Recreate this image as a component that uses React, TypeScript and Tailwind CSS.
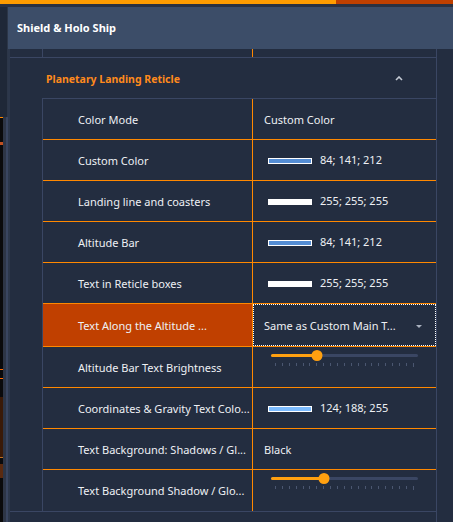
import React from "react";

const border = "border-[#3a4663]";

type RowProps = {
  label: string;
  children?: React.ReactNode;
  selected?: boolean;
  last?: boolean;
};

function Row({ label, children, selected, last }: RowProps) {
  return (
    <div
      className={`flex ${selected ? "h-[43px]" : "h-[41px]"} ${
        last ? "" : "border-b border-[#ff8800]"
      }`}
    >
      <div
        className={`flex w-[210px] shrink-0 items-center overflow-hidden whitespace-nowrap border-r border-[#ff8800] pl-[35px] pt-[2px] ${
          selected ? "bg-[#c04000]" : ""
        }`}
      >
        {label}
      </div>
      <div
        className={`flex min-w-0 flex-1 flex-col ${
          selected ? "border border-dotted border-white" : ""
        }`}
      >
        {children}
      </div>
    </div>
  );
}

function Text({ children }: { children: React.ReactNode }) {
  return <div className="flex h-full items-center pl-[11px] pt-[2px]">{children}</div>;
}

function Swatch({ color, value }: { color: string; value: string }) {
  return (
    <div className="flex h-full items-center pl-[15px] pt-px">
      <span
        className="h-[6px] w-[44px] border border-white"
        style={{ backgroundColor: color }}
      />
      <span className="ml-[8px]">{value}</span>
    </div>
  );
}

function Slider({ pct }: { pct: number }) {
  return (
    <div className="pt-[7px]">
      <div className="relative ml-[18px] h-[3px] w-[147px] rounded-full bg-[#3a4663]">
        <div
          className="absolute left-0 top-0 h-[3px] rounded-full bg-[#ffa010]"
          style={{ width: `${pct}%` }}
        />
        <div
          className="absolute top-[-4px] h-[11px] w-[11px] -translate-x-1/2 rounded-full bg-[#ffa010]"
          style={{ left: `${pct}%` }}
        />
      </div>
      <div className="ml-[22px] mt-[6px] flex w-[139px] justify-between">
        {Array.from({ length: 21 }).map((_, i) => (
          <span
            key={i}
            className={`w-px bg-[#4a5670] ${i === 20 ? "h-[4px]" : "h-[3px]"}`}
          />
        ))}
      </div>
    </div>
  );
}

export default function App() {
  return (
    <div
      className="flex h-[522px] w-[453px] flex-col overflow-hidden bg-[#232d40] text-[11px] text-[#eef0f4]"
      style={{ fontFamily: '"Noto Sans", "Open Sans", sans-serif' }}
    >
      <div className="flex h-[4px] shrink-0">
        <div className="w-[336px] bg-[#ff9c00]" />
        <div className="flex-1 bg-[#c04000]" />
      </div>
      <div className="h-[3px] shrink-0 bg-[#2a3141]" />

      <div className="flex flex-1">
        {/* left edge: backdrop peeking through */}
        <div className="flex w-[8px] shrink-0 flex-col">
          <div className="h-[110px] border-r border-[#2c3648] bg-[#1f2838]" />
          <div className="flex flex-1">
            <div className="flex w-[3px] flex-col bg-[#0a0a0c]">
              <div className="h-px bg-[#ff8800]" />
              <div className="h-[24px]" />
              <div className="h-[3px] bg-[#c05020]" />
              <div className="h-[224px]" />
              <div className="h-px bg-[#ff6a00]" />
              <div className="h-[8px]" />
              <div className="h-px bg-[#ff6a00]" />
              <div className="h-[18px]" />
              <div className="h-[60px] bg-[#3a1a08]" />
              <div className="h-px bg-[#c07020]" />
              <div className="h-[6px]" />
              <div className="h-[14px] bg-[#5a2a10]" />
            </div>
            <div className="w-[3px] bg-[#2d3546]" />
            <div className="w-[2px] bg-[#394560]" />
          </div>
        </div>

        <div className="flex flex-1 flex-col">
          <div className="flex h-[42px] shrink-0 items-center bg-[#3c4d68] pl-[9px] pt-px text-[11px] font-bold text-white">
            Shield &amp; Holo Ship
          </div>

          <div className="flex flex-1 border-l-2 border-[#2c374b]">
            <div className={`flex w-[427px] flex-col border-r ${border}`}>
              <div className={`h-[9px] shrink-0 border-b ${border}`}>
                <div className={`ml-[32px] h-full border-l ${border}`}>
                  <div className="h-full w-[210px] border-r border-[#ff8800]" />
                </div>
              </div>

              <div className="flex h-[40px] shrink-0 items-center justify-between pl-[36px] pr-[33px]">
                <span className="pt-[3px] text-[10.5px] font-bold text-[#ff8a1c]">
                  Planetary Landing Reticle
                </span>
                <svg width="8" height="5" viewBox="0 0 8 5">
                  <polyline
                    points="1,4 4,1 7,4"
                    fill="none"
                    stroke="#c4cad4"
                    strokeWidth="1.6"
                  />
                </svg>
              </div>

              <div className={`ml-[32px] border-l border-t ${border}`}>
                <Row label="Color Mode">
                  <Text>Custom Color</Text>
                </Row>
                <Row label="Custom Color">
                  <Swatch color="rgb(84,141,212)" value="84; 141; 212" />
                </Row>
                <Row label="Landing line and coasters">
                  <Swatch color="rgb(255,255,255)" value="255; 255; 255" />
                </Row>
                <Row label="Altitude Bar">
                  <Swatch color="rgb(84,141,212)" value="84; 141; 212" />
                </Row>
                <Row label="Text in Reticle boxes">
                  <Swatch color="rgb(255,255,255)" value="255; 255; 255" />
                </Row>
                <Row label="Text Along the Altitude ..." selected>
                  <div className="flex h-full items-center justify-between pl-[10px] pr-[13px] pt-[2px]">
                    <span>Same as Custom Main T...</span>
                    <svg width="6" height="3" viewBox="0 0 6 3">
                      <polygon points="0,0 6,0 3,3" fill="#aab2c0" />
                    </svg>
                  </div>
                </Row>
                <Row label="Altitude Bar Text Brightness">
                  <Slider pct={31} />
                </Row>
                <Row label="Coordinates & Gravity Text Colo...">
                  <Swatch color="rgb(124,188,255)" value="124; 188; 255" />
                </Row>
                <Row label="Text Background: Shadows / Gl...">
                  <Text>Black</Text>
                </Row>
                <Row label="Text Background Shadow / Glo..." last>
                  <Slider pct={36} />
                </Row>
              </div>
              <div className={`flex-1 border-t ${border}`} />
            </div>
          </div>
        </div>
      </div>
    </div>
  );
}
